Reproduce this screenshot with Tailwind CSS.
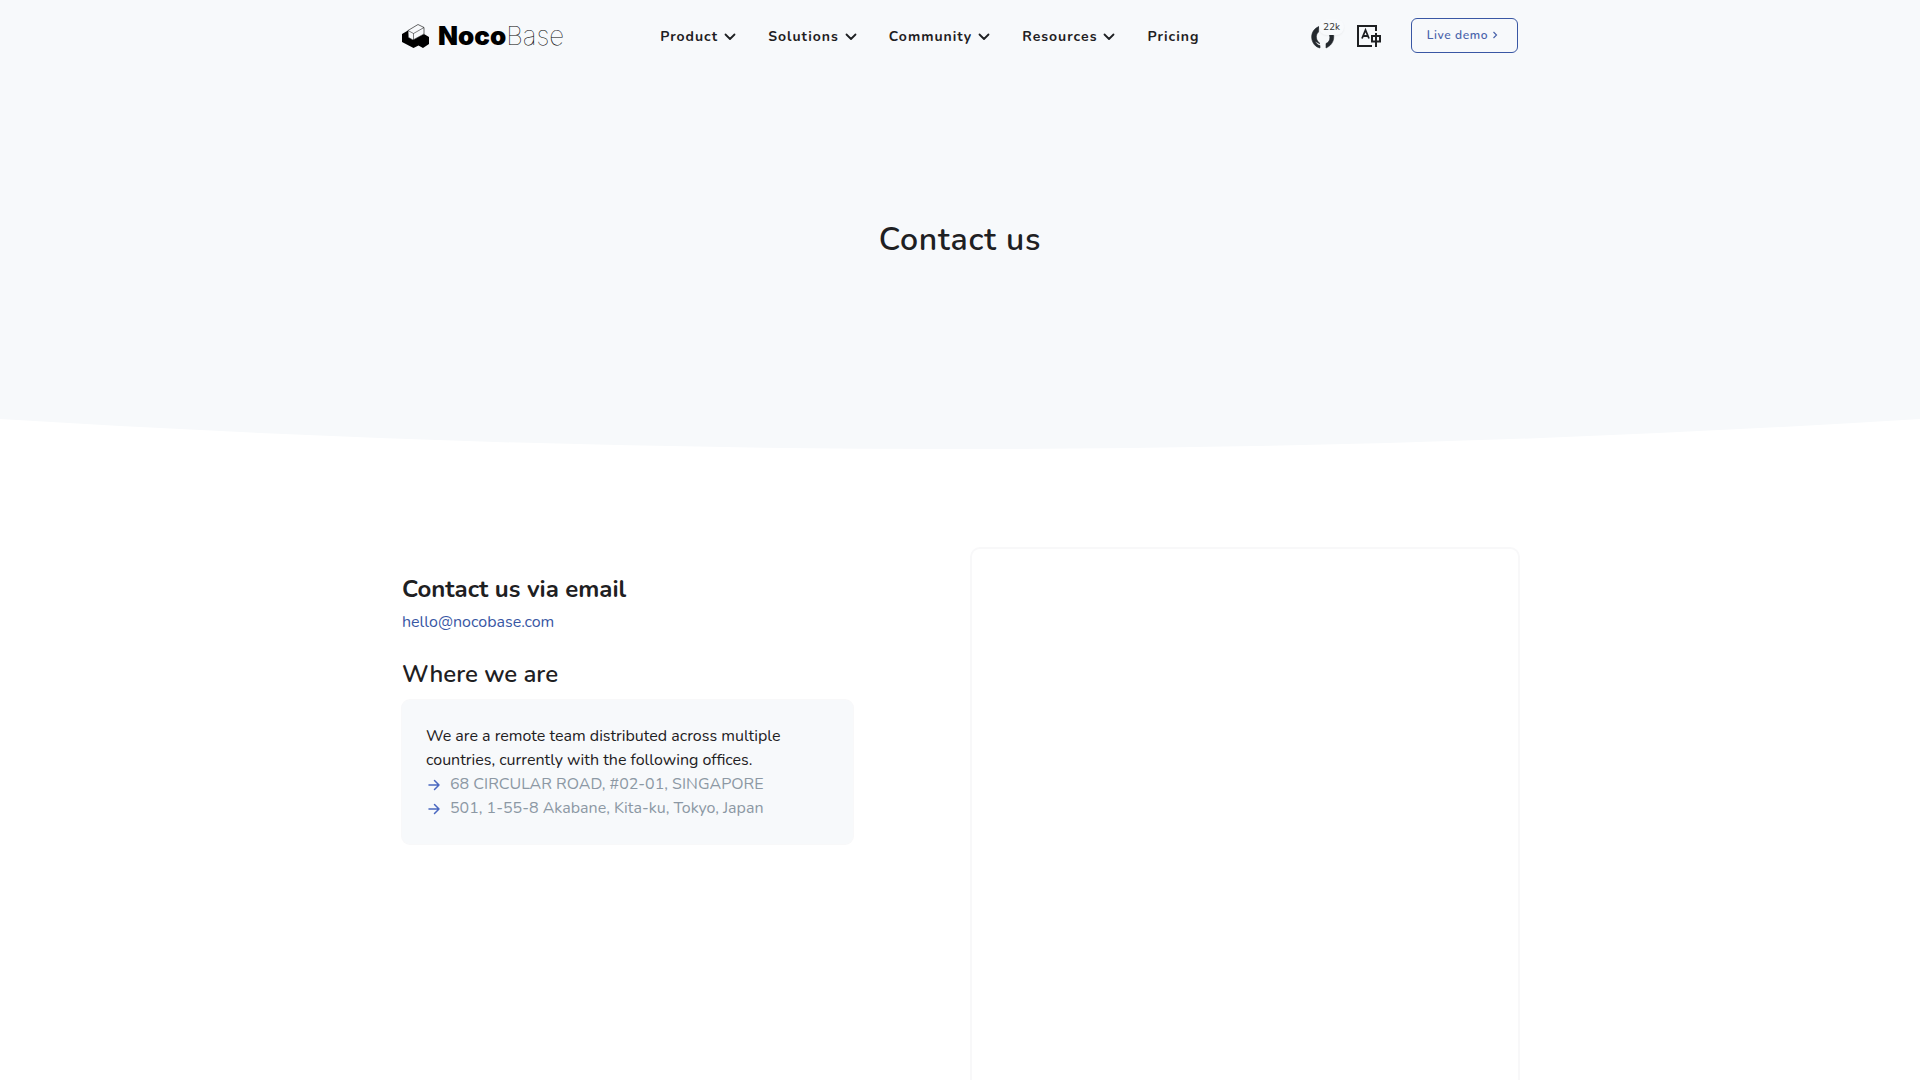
<!DOCTYPE html>
<html lang="en">
<head>
  <meta charset="UTF-8">
  <meta name="viewport" content="width=device-width, initial-scale=1.0">
  <title>Contact us - NocoBase</title>
  <script src="https://cdn.jsdelivr.net/npm/@tailwindcss/browser@4"></script>
</head>
<body class="bg-white font-['Nunito','Lato',sans-serif] text-[#1e2022] overflow-x-hidden">
  <!-- Header -->
  <header class="bg-[#f7f9fb]">
    <div class="max-w-[1140px] mx-auto px-3 h-18 flex items-center">
      <a href="#" class="flex items-center gap-2 text-black" aria-label="NocoBase">
        <svg class="w-7 h-6" viewBox="0 0 28 24" fill="none">
          <path d="M0 10 L6 6.500 V13 L11 16 L22 10 L27 13 V20 L21 24 L16.500 21.500 L11.500 24 L0 18 Z" fill="#000"/>
          <path d="M6 6.500 L16 0.500 L22 3.500 V10 L11 16 L6.500 13.500 Z" fill="#f7f9fb" stroke="#000" stroke-width=".6"/>
          <path d="M6 6.500 L11.500 9.500 L22 3.500 M11.500 9.500 V16" stroke="#000" stroke-width=".5"/>
        </svg>
        <span class="font-['Inter',sans-serif] text-[26px] leading-8 flex"><b class="font-black">Noco</b><span class="font-thin">Base</span></span>
      </a>

      <nav class="ml-24 pt-0.5 flex items-center gap-8 text-sm font-bold tracking-[1px]">
        <a href="#" class="flex items-center gap-1.5">Product
          <svg class="w-3 h-3" viewBox="0 0 12 12" fill="none" stroke="currentColor" stroke-width="1.8" stroke-linecap="round" stroke-linejoin="round"><path d="M1.500 3.500 L6 8 L10.500 3.500"/></svg>
        </a>
        <a href="#" class="flex items-center gap-1.5">Solutions
          <svg class="w-3 h-3" viewBox="0 0 12 12" fill="none" stroke="currentColor" stroke-width="1.8" stroke-linecap="round" stroke-linejoin="round"><path d="M1.500 3.500 L6 8 L10.500 3.500"/></svg>
        </a>
        <a href="#" class="flex items-center gap-1.5">Community
          <svg class="w-3 h-3" viewBox="0 0 12 12" fill="none" stroke="currentColor" stroke-width="1.8" stroke-linecap="round" stroke-linejoin="round"><path d="M1.500 3.500 L6 8 L10.500 3.500"/></svg>
        </a>
        <a href="#" class="flex items-center gap-1.5">Resources
          <svg class="w-3 h-3" viewBox="0 0 12 12" fill="none" stroke="currentColor" stroke-width="1.8" stroke-linecap="round" stroke-linejoin="round"><path d="M1.500 3.500 L6 8 L10.500 3.500"/></svg>
        </a>
        <a href="#">Pricing</a>
      </nav>

      <div class="ml-auto flex items-center">
        <a href="#" class="relative pt-0.5" aria-label="GitHub">
          <svg class="w-6 h-6" viewBox="0 0 24 24" fill="none" stroke="#24292e">
            <path d="M8 1.500 C1 4 -1 12 2 17.500 C3.500 20.500 6 22.500 9 23 V20.500 C6.500 20.500 5.500 18 4 16.500 C6.500 17 7 18.500 9 18.500 C5 16 4 10 7.500 7 Z" fill="#24292e" stroke-width=".6"/>
            <path d="M21.500 6 C24.500 13 22 20 15 23 V18.500 C19 17 20 12 17.500 8 Z" fill="#24292e" stroke-width=".6"/>
          </svg>
          <span class="absolute left-2 -top-1 h-4 px-1 rounded-full bg-[#f8fafc] shadow-xs text-[10px] leading-4 text-[#333]">22k</span>
        </a>
        <a href="#" class="ml-[22px]" aria-label="Language">
          <svg class="w-6 h-6" viewBox="0 0 24 24" fill="none" stroke="#1e2022" stroke-width="2">
            <path d="M19 7 V2 H1 V22 H15"/>
            <path d="M5 14.500 L8.500 6 L12 14.500 M6.500 12 H10.500" stroke-width="1.800"/>
            <path d="M15 12 H23 V17.500 H15 Z M19 9 V23"/>
          </svg>
        </a>
        <a href="#" class="ml-[30px] mb-0.5 w-[107px] h-[35px] pr-1 flex items-center justify-center gap-1 rounded-md border border-[#3957a4] text-[#4a64ab] text-xs font-semibold tracking-wider">Live demo
          <svg class="w-1.5 h-2" viewBox="0 0 6 8" fill="none" stroke="currentColor" stroke-width="1.200"><path d="M1.500 1 L4.500 4 L1.500 7"/></svg>
        </a>
      </div>
    </div>
  </header>

  <main>
    <!-- Hero -->
    <section class="bg-[#f7f9fb] pt-36 pb-[155px] text-center">
      <h1 class="text-[32px] leading-12 font-semibold tracking-wide">Contact us</h1>
    </section>
    <svg class="block w-full h-[30px]" viewBox="0 0 1920 30" preserveAspectRatio="none"><path d="M0 0 H1920 Q960 60 0 0 Z" fill="#f7f9fb"/></svg>

    <!-- Content -->
    <section class="max-w-[1140px] mx-auto pt-[100px] grid grid-cols-12">
      <div class="col-span-5 px-3 pt-6">
        <h2 class="text-2xl leading-8 font-bold">Contact us via email</h2>
        <a href="mailto:hello@nocobase.com" class="mt-[5px] block text-base leading-6 text-[#3957a4]">hello@nocobase.com</a>
        <h2 class="mt-6 text-2xl leading-8 font-semibold">Where we are</h2>
        <div class="mt-[10px] p-6 rounded-lg bg-[#f7f9fb] ring-1 ring-[#f8f8f9]">
          <p class="leading-6">We are a remote team distributed across multiple countries, currently with the following offices.</p>
          <ul class="leading-6 text-[#8c98a4]">
            <li class="flex items-center gap-2">
              <svg class="w-4 h-4 text-[#4a68c0]" viewBox="0 0 16 16" fill="none" stroke="currentColor" stroke-width="1.500" stroke-linecap="round" stroke-linejoin="round"><path d="M3 9 H13 M8.500 4.500 L13 9 L8.500 13.500"/></svg>
              68 CIRCULAR ROAD, #02-01, SINGAPORE
            </li>
            <li class="flex items-center gap-2">
              <svg class="w-4 h-4 text-[#4a68c0]" viewBox="0 0 16 16" fill="none" stroke="currentColor" stroke-width="1.500" stroke-linecap="round" stroke-linejoin="round"><path d="M3 9 H13 M8.500 4.500 L13 9 L8.500 13.500"/></svg>
              501, 1-55-8 Akabane, Kita-ku, Tokyo, Japan
            </li>
          </ul>
        </div>
      </div>
      <div class="col-span-6 col-start-7 px-3">
        <div class="min-h-[640px] rounded-lg ring-2 ring-[#f8f8f9]"></div>
      </div>
    </section>
  </main>
</body>
</html>
